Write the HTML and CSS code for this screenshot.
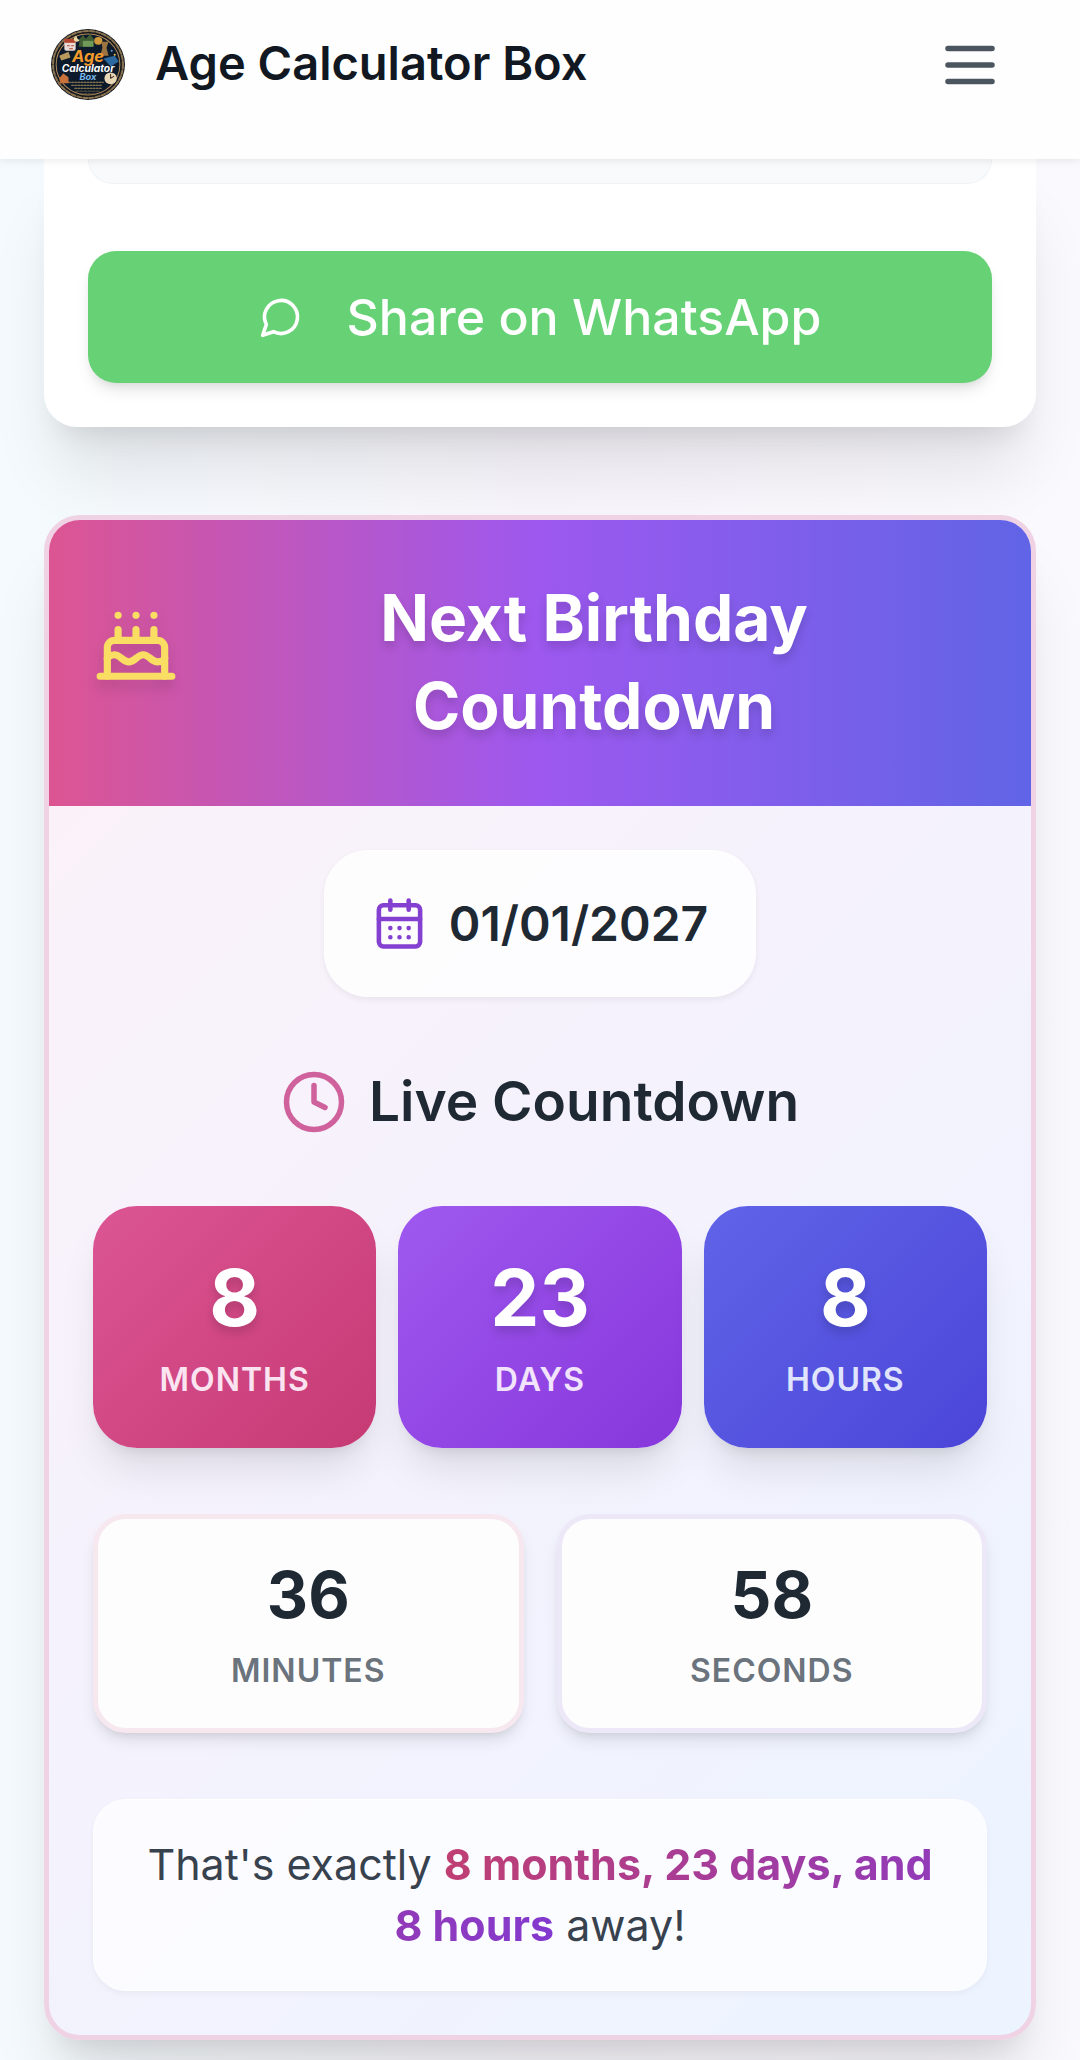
FILE: index.html
```
<!DOCTYPE html>
<html lang="en">
<head>
<meta charset="UTF-8" />
<meta name="viewport" content="width=device-width, initial-scale=1" />
<title>Age Calculator Box</title>
<link rel="stylesheet" href="styles.css">
</head>
<body>
  <header class="site-header">
    <a class="brand" href="#">
      <svg class="logo" viewBox="0 0 72 72" preserveAspectRatio="none" aria-hidden="true">
        <circle cx="36" cy="36" r="36" fill="#15181d" />
        <circle cx="36" cy="36" r="34" fill="none" stroke="#8a7350" stroke-width="2" stroke-dasharray="4 2" />
        <circle cx="36" cy="36" r="31" fill="#0d1a2b" stroke="#b08a5a" stroke-width="1" />
        <!-- calendar, trees and gears round the wordmark -->
        <rect x="13" y="11" width="11" height="11" rx="2" fill="#e9dcd6" />
        <rect x="13" y="10" width="11" height="4" fill="#b5442f" />
        <path d="M16 17h2M20 17h2M18 20h3" stroke="#b5442f" stroke-width="1" />
        <path d="M28 10l3-4 3 4 4-5 4 6v7H27z" fill="#3f5c33" />
        <path d="M31 12h10v6h-10z" fill="#6f9a58" />
        <circle cx="46" cy="12" r="4" fill="#d39a3c" />
        <path d="M49 13h7l-2 6 2 8h-8l2-8z" fill="#9b7440" />
        <path d="M25 7a3 3 0 1 0 3 4 4 4 0 0 1-3-4z" fill="#e8d9a0" />
        <path d="M8 27l9-4 2 6-9 3z" fill="#b79a5c" />
        <path d="M51 30l11-3 4 6-8 5z" fill="#2c69a0" />
        <circle cx="59" cy="22" r="1" fill="#5aa0e0" />
        <circle cx="62" cy="26" r="1" fill="#f0c04a" />
        <path d="M8 50l4-5 5 4v6h-8z" fill="#c9713b" />
        <circle cx="58" cy="50" r="6" fill="#e8d6b4" />
        <path d="M58 50v-4M58 50l3-2" stroke="#3b2c1c" stroke-width="1" />
        <path d="M17 54h34M20 57h30M23 60h26" stroke="#a98e56" stroke-width="1" stroke-dasharray="2 1" />
        <path d="M24 63h24M28 66h16" stroke="#7c6740" stroke-width="1" stroke-dasharray="3 1" />
        <text x="36" y="33" class="logo-age">Age</text>
        <text x="36" y="44" class="logo-calc">Calculator</text>
        <text x="36" y="52" class="logo-box">Box</text>
      </svg>
      <span class="brand-name">Age Calculator Box</span>
    </a>
    <button class="menu-btn" type="button" aria-label="Open menu">
      <svg class="icon-lg" viewBox="0 0 24 24"><path d="M4 6h16M4 12h16M4 18h16" /></svg>
    </button>
  </header>

  <main>
    <section class="card result-card">
      <div class="result-box"></div>
      <button class="share-btn" type="button">
        <svg class="icon-sm" viewBox="0 0 24 24"><path d="M7.9 20A9 9 0 1 0 4 16.1L2 22Z" /></svg>
        Share on WhatsApp
      </button>
    </section>

    <section class="card birthday-card">
      <div class="birthday-head">
        <svg class="cake" viewBox="0 0 24 24"><path d="M20 21v-8a2 2 0 0 0-2-2H6a2 2 0 0 0-2 2v8" /><path d="M4 16s.5-1 2-1 2.500 2 4 2 2.500-2 4-2 2.500 2 4 2 2-1 2-1" /><path d="M2 21h20M7 8v3M12 8v3M17 8v3M7 4h.01M12 4h.01M17 4h.01" /></svg>
        <h2>Next Birthday Countdown</h2>
      </div>

      <div class="birthday-body">
        <div class="date-pill">
          <svg class="icon-md" viewBox="0 0 24 24"><path d="M8 2v4M16 2v4" /><rect x="3" y="4" width="18" height="18" rx="2" /><path d="M3 10h18M8 14h.01M12 14h.01M16 14h.01M8 18h.01M12 18h.01M16 18h.01" /></svg>
          <time datetime="2027-01-01">01/01/2027</time>
        </div>

        <h3 class="live-title">
          <svg class="icon-lg" viewBox="0 0 24 24"><circle cx="12" cy="12" r="10" /><path d="M12 6v6l4 2" /></svg>
          Live Countdown
        </h3>

        <div class="tiles">
          <div class="tile months"><span class="num">8</span><span class="unit">Months</span></div>
          <div class="tile days"><span class="num">23</span><span class="unit">Days</span></div>
          <div class="tile hours"><span class="num">8</span><span class="unit">Hours</span></div>
        </div>

        <div class="small-tiles">
          <div class="small-tile minutes"><span class="num">36</span><span class="unit">Minutes</span></div>
          <div class="small-tile seconds"><span class="num">58</span><span class="unit">Seconds</span></div>
        </div>

        <p class="summary">That's exactly <strong>8 months, 23 days, and 8 hours</strong> away!</p>
      </div>
    </section>
  </main>
</body>
</html>
```
FILE: styles.css
```
* {
  box-sizing: border-box;
}
body {
  margin: 0;
  font-family: Inter, "Liberation Sans", sans-serif;
  color: #1f2933;
  background: linear-gradient(90deg, #f4fafd, #f8f6fc 50%, #faf9fe);
}
h2, h3, p {
  margin: 0;
}
button {
  font-family: inherit;
  border: none;
  cursor: pointer;
}
svg {
  fill: none;
  stroke: currentColor;
  stroke-width: 2;
  stroke-linecap: round;
  stroke-linejoin: round;
  flex-shrink: 0;
}
.icon-sm {
  width: 44px;
  height: 44px;
}
.icon-md {
  width: 55px;
  height: 55px;
}
.icon-lg {
  display: block;
  width: 66px;
  height: 66px;
}

/* header */
.site-header {
  position: relative;
  z-index: 10;
  display: flex;
  align-items: center;
  justify-content: space-between;
  padding: 29px 77px 59px 51px;
  background: #fefefe;
  box-shadow: 0 2px 8px rgba(0, 0, 0, 0.08);
}
.brand {
  display: flex;
  align-items: center;
  gap: 30px;
  color: #111822;
  text-decoration: none;
}
.logo {
  width: 74px;
  height: 71px;
  stroke: none;
}
.logo text {
  font-weight: bold;
  font-style: italic;
  text-anchor: middle;
}
.logo-age {
  font-size: 16px;
  fill: #f39a2b;
}
.logo-calc {
  font-size: 10px;
  fill: #ffffff;
}
.logo-box {
  font-size: 9px;
  fill: #7ab8ee;
}
.brand-name {
  font-size: 47px;
  font-weight: 600;
  line-height: 66px;
  padding-bottom: 4px;
}
.menu-btn {
  padding: 0;
  background: none;
  color: #4b5560;
}

/* cards */
main {
  padding: 0 44px 20px;
}
.card {
  box-shadow: 0 55px 69px -14px rgba(0, 0, 0, 0.1), 0 22px 28px -16px rgba(0, 0, 0, 0.1);
}
.result-card {
  padding: 0 44px 44px;
  background: #fff;
  border-radius: 0 0 33px 33px;
}
.result-box {
  height: 25px;
  margin-bottom: 67px;
  background: #f8fafc;
  border: 1px solid #f0f2f4;
  border-top: none;
  border-radius: 0 0 33px 33px;
}
.share-btn {
  display: flex;
  align-items: center;
  justify-content: center;
  gap: 44px;
  width: 100%;
  height: 132px;
  border-radius: 28px;
  background: #66d275;
  color: #fff;
  font-size: 50px;
  font-weight: 500;
  box-shadow: 0 10px 16px -3px rgba(0, 0, 0, 0.1), 0 5px 10px -5px rgba(0, 0, 0, 0.1);
}
.birthday-card {
  margin-top: 88px;
  border: 5px solid #f0d2e5;
  border-radius: 36px;
  background: linear-gradient(135deg, #fdf2f8, #f4f2fd 50%, #ecf4ff);
}
.birthday-head {
  display: flex;
  align-items: center;
  gap: 22px;
  padding: 54px 44px 56px;
  border-radius: 31px 31px 0 0;
  background: linear-gradient(90deg, #dc5592, #9d58ef 50%, #6064e6);
  color: #fff;
}
.cake {
  width: 86px;
  height: 86px;
  margin-bottom: 36px;
  color: #fade63;
  filter: drop-shadow(0 8px 6px rgba(0, 0, 0, 0.12));
}
.birthday-head h2 {
  flex: 1;
  padding: 0 80px;
  font-size: 64px;
  font-weight: 700;
  line-height: 88px;
  text-align: center;
  text-shadow: 0 6px 10px rgba(0, 0, 0, 0.15);
}
.birthday-body {
  display: flex;
  flex-direction: column;
  gap: 66px;
  padding: 44px;
}

.date-pill {
  display: flex;
  align-items: center;
  gap: 22px;
  align-self: center;
  height: 147px;
  padding: 0 47px;
  border-radius: 44px;
  background: rgba(255, 255, 255, 0.8);
  border: 1px solid #fff;
  box-shadow: 0 3px 6px rgba(0, 0, 0, 0.06);
  font-size: 48px;
  font-weight: 600;
}
.date-pill svg {
  color: #8440d0;
}
.live-title {
  display: flex;
  align-items: center;
  justify-content: center;
  gap: 22px;
  font-size: 55px;
  font-weight: 600;
  line-height: 77px;
}
.live-title svg {
  color: #cf629c;
}

/* countdown */
.tiles {
  display: grid;
  grid-template-columns: repeat(3, 1fr);
  gap: 22px;
}
.small-tiles {
  display: grid;
  grid-template-columns: repeat(2, 1fr);
  gap: 33px;
}
.tile, .small-tile {
  display: flex;
  flex-direction: column;
  align-items: center;
}
.tile {
  padding: 42px 22px 46px;
  border-radius: 44px;
  color: #fff;
  box-shadow: 0 28px 42px -8px rgba(0, 0, 0, 0.1), 0 11px 16px -10px rgba(0, 0, 0, 0.12);
}
.num {
  font-weight: 700;
}
.unit {
  font-size: 32px;
  font-weight: 600;
  line-height: 44px;
  letter-spacing: 1px;
  text-transform: uppercase;
}
.tile .num {
  font-size: 78px;
  line-height: 99px;
  margin-bottom: 11px;
  text-shadow: 0 6px 10px rgba(0, 0, 0, 0.15);
}
.months {
  background: linear-gradient(135deg, #dc5594, #c63a74);
}
.days {
  background: linear-gradient(135deg, #9f59ef, #8737db);
}
.hours {
  background: linear-gradient(135deg, #6064e8, #4b45d8);
}
.months .unit {
  color: #fbe4f1;
}
.days .unit {
  color: #f2e4fd;
}
.hours .unit {
  color: #e0e5fd;
}
.small-tile {
  padding: 35px 28px;
  border: 5px solid #f7e8f0;
  border-radius: 33px;
  background: #fdfdfe;
  box-shadow: 0 10px 16px -3px rgba(0, 0, 0, 0.1), 0 5px 10px -5px rgba(0, 0, 0, 0.1);
}
.seconds {
  border-color: #ede8f8;
}
.small-tile .num {
  font-size: 64px;
  line-height: 82px;
  margin-bottom: 13px;
}
.small-tile .unit {
  color: #6b737d;
}

.summary {
  padding: 34px 44px;
  border: 1px solid #fff;
  border-radius: 33px;
  background: rgba(255, 255, 255, 0.7);
  box-shadow: 0 3px 6px rgba(0, 0, 0, 0.04);
  color: #37424e;
  font-size: 43px;
  line-height: 61px;
  text-align: center;
}
.summary strong {
  font-weight: 700;
  background: linear-gradient(90deg, #bf3f72, #8339cf);
  -webkit-background-clip: text;
  background-clip: text;
  color: transparent;
}
```
